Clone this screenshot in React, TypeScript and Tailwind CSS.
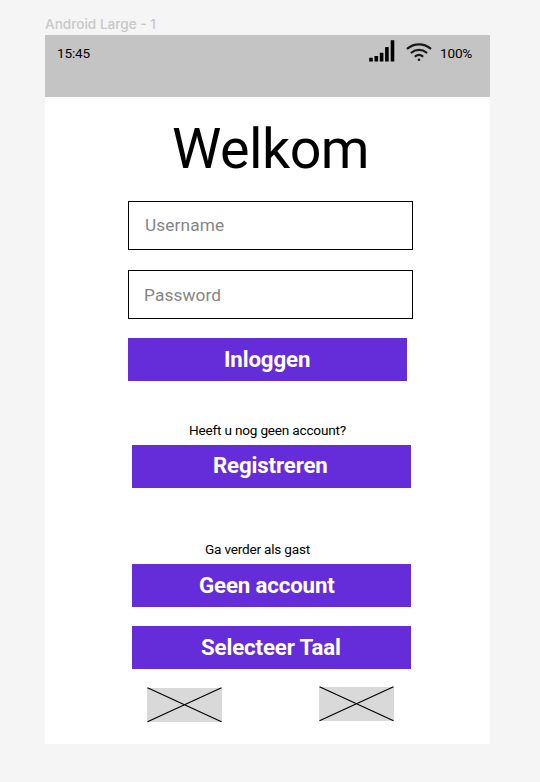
function SignalIcon() {
  return (
    <svg className="block" width="26" height="22" viewBox="0 0 26 22" fill="#000">
      <rect x="0.2" y="17.8" width="3.6" height="3.8" rx="0.4" />
      <rect x="5.5" y="16.1" width="3.6" height="5.5" rx="0.4" />
      <rect x="10.8" y="12.7" width="3.6" height="8.9" rx="0.4" />
      <rect x="16.1" y="7.1" width="3.6" height="14.5" rx="0.4" />
      <rect x="21.7" y="0.3" width="3.6" height="21.3" rx="0.4" />
    </svg>
  );
}

function WifiIcon() {
  return (
    <svg className="block" width="26" height="20" viewBox="0 0 26 20" fill="none" stroke="#1a1a1a" strokeWidth="2.3" strokeLinecap="round">
      <path d="M1.7 6.4C8 0.9 18 0.9 24.3 6.4" />
      <path d="M5.6 10.5C9.7 6.9 16.3 6.9 20.4 10.5" />
      <path d="M9.6 14.2C11.5 12.5 14.5 12.5 16.4 14.2" />
      <circle cx="13" cy="17.8" r="1.3" fill="#1a1a1a" stroke="none" />
    </svg>
  );
}

function Placeholder({ className }: { className: string }) {
  return (
    <svg className={className} width="75" height="36" viewBox="0 0 75 36">
      <rect x="0" y="1" width="75" height="34" fill="#d9d9d9" />
      <path d="M0.5 0.8L74.5 34.8M0.5 34.8L74.5 0.8" stroke="#000" strokeWidth="1.2" />
    </svg>
  );
}

function Field({ label, className }: { label: string; className: string }) {
  return (
    <input
      placeholder={label}
      className={`block h-[49px] w-[285px] border-[1.2px] border-black bg-white text-[17.3px] tracking-[0.1px] text-black outline-none placeholder:text-[#858585] placeholder:opacity-100 ${className}`}
    />
  );
}

function Button({ label, className }: { label: string; className: string }) {
  return (
    <button
      className={`block h-[43px] w-[279px] bg-[#652dd9] text-left text-[22.25px] font-bold tracking-[-0.14px] whitespace-nowrap text-white ${className}`}
    >
      {label}
    </button>
  );
}

export default function App() {
  return (
    <div className="h-[782px] w-[540px] overflow-hidden bg-[#f5f5f5] pl-[45px] font-['Roboto','Liberation_Sans',sans-serif] text-black">
      <div className="h-[35px] pt-[16px] font-['Inter','Roboto',sans-serif] text-[13.6px] leading-[17px] font-medium text-[#c8c8c8]">
        Android Large - 1
      </div>
      <div className="h-[709px] w-[445px] bg-white">
        <header className="flex h-[62px] items-start bg-[#c4c4c4] pl-[12px] text-[13.6px] leading-[16px] tracking-[-0.2px]">
          <span className="mt-[10px] w-[312px]">15:45</span>
          <span className="mt-[5px]">
            <SignalIcon />
          </span>
          <span className="mt-[7px] ml-[11px]">
            <WifiIcon />
          </span>
          <span className="mt-[10px] ml-[8px]">100%</span>
        </header>
        <main className="flex flex-col items-start">
          <h1 className="mt-[20px] ml-[127px] text-[55.6px] leading-[64px] font-normal tracking-[-0.5px]">Welkom</h1>
          <Field label="Username" className="mt-[20px] ml-[83px] pb-[2px] pl-[16px]" />
          <Field label="Password" className="mt-[20px] ml-[83px] pl-[15px]" />
          <Button label="Inloggen" className="mt-[19px] ml-[83px] pl-[96px] leading-[43px]" />
          <p className="mt-[41px] ml-[144px] text-[13.6px] leading-[16px] tracking-[-0.2px]">Heeft u nog geen account?</p>
          <Button label="Registreren" className="mt-[7px] ml-[87px] pb-[2px] pl-[81px] leading-[41px]" />
          <p className="mt-[53px] ml-[160px] text-[13.6px] leading-[16px] tracking-[-0.2px]">Ga verder als gast</p>
          <Button label="Geen account" className="mt-[7px] ml-[87px] pl-[67px] leading-[43px]" />
          <Button label="Selecteer Taal" className="mt-[19px] ml-[87px] pl-[69px] leading-[43px]" />
          <div className="mt-[17px] ml-[102px] flex items-start gap-[97px]">
            <Placeholder className="mt-[1px] block" />
            <Placeholder className="block" />
          </div>
        </main>
      </div>
    </div>
  );
}
